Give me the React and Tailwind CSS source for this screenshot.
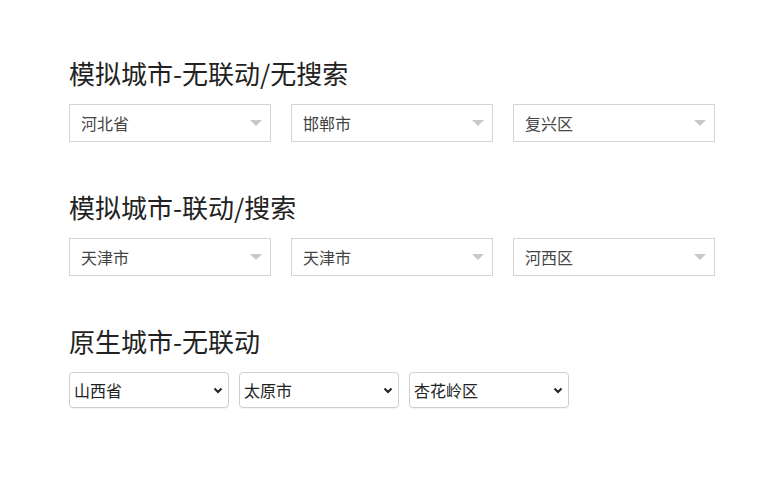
import React from 'react';

const font = { fontFamily: '"Noto Sans CJK SC", "Noto Sans", sans-serif' };

/* Select simulado con triángulo gris */
const FakeSelect = ({ value }) => (
  <div className='flex items-center justify-between w-[202px] h-[38px] border border-[#d4d4d4] bg-white pl-[11px] pr-[8px]'>
    <span className='text-[16px] text-[#444] leading-none'>{value}</span>
    <svg width="12" height="6" viewBox="0 0 12 6">
      <polygon points="0,0 12,0 6,6" fill="#c8c8c8" />
    </svg>
  </div>
);

/* Select nativo */
const NativeSelect = ({ value }) => (
  <div className='relative w-[160px] h-[36px]'>
    <select
      defaultValue={value}
      className='appearance-none w-full h-full border border-[#cfcfcf] rounded-[4px] bg-white pl-[4px] text-[16px] text-[#222] shadow-[0_1px_1px_rgba(0,0,0,0.05)]'
    >
      <option value={value}>{value}</option>
    </select>
    <svg className='absolute right-[6px] top-[15px] pointer-events-none' width="10" height="7" viewBox="0 0 10 7">
      <path d="M1.5 1.5 L5 5 L8.5 1.5" fill="none" stroke="#222" strokeWidth="2" />
    </svg>
  </div>
);

const Titulo = ({ children }) => (
  <h2 className='text-[26px] leading-[36px] text-[#222] mb-[13px]'>{children}</h2>
);

export default function App() {
  return (
    <div className='w-[759px] h-[498px] bg-white pl-[69px] pt-[55px]' style={font}>
      <Titulo>模拟城市-无联动/无搜索</Titulo>
      <div className='flex gap-[20px]'>
        <FakeSelect value="河北省" />
        <FakeSelect value="邯郸市" />
        <FakeSelect value="复兴区" />
      </div>

      <div className='mt-[47px]'>
        <Titulo>模拟城市-联动/搜索</Titulo>
        <div className='flex gap-[20px]'>
          <FakeSelect value="天津市" />
          <FakeSelect value="天津市" />
          <FakeSelect value="河西区" />
        </div>
      </div>

      <div className='mt-[47px]'>
        <Titulo>原生城市-无联动</Titulo>
        <div className='flex gap-[10px]'>
          <NativeSelect value="山西省" />
          <NativeSelect value="太原市" />
          <NativeSelect value="杏花岭区" />
        </div>
      </div>
    </div>
  );
}
